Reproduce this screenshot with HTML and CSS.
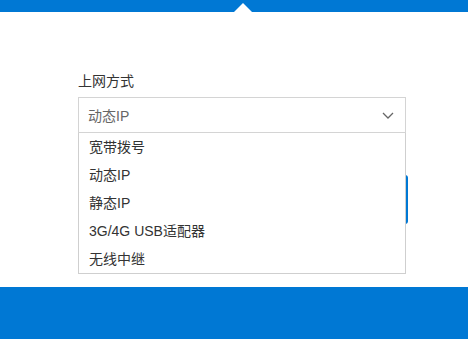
FILE: index.html
```html
<!DOCTYPE html>
<html lang="zh-CN">
<head>
    <meta charset="UTF-8">
    <meta name="viewport" content="width=device-width, initial-scale=1.0">
    <title>上网设置</title>
    <link rel="stylesheet" href="styles.css">
</head>
<body>

    <div class="top-bar"></div>

    <div class="main">
        <div class="field">
            <div class="field-label">上网方式</div>
            <div class="select-wrap">
                <div class="select-box">
                    <span class="select-value">动态IP</span>
                    <svg class="chevron" width="12" height="7" viewBox="0 0 12 7">
                        <path d="M1 1 L6 6 L11 1" fill="none" stroke="#666" stroke-width="1.3"/>
                    </svg>
                </div>
                <ul class="option-list">
                    <li class="option">宽带拨号</li>
                    <li class="option">动态IP</li>
                    <li class="option">静态IP</li>
                    <li class="option">3G/4G USB适配器</li>
                    <li class="option">无线中继</li>
                </ul>
            </div>
            <button class="next-button">下一步</button>
        </div>
    </div>

    <div class="bottom-bar"></div>

</body>
</html>
```

FILE: styles.css
```css
/* Page */
body {
    margin: 0;
    font-family: "Liberation Sans", "Noto Sans CJK SC", sans-serif;
    font-size: 14px;
    color: #333;
    background: #fff;
    overflow: hidden;
}

/* Header strip with the pointer notch */
.top-bar {
    position: relative;
    height: 12px;
    background: #0078d4;
}

.top-bar::after {
    content: "";
    position: absolute;
    left: 234px;
    bottom: 0;
    border-left: 9px solid transparent;
    border-right: 9px solid transparent;
    border-bottom: 9px solid #fff;
}

/* Content area */
.main {
    height: 275px;
    padding: 60px 0 0 78px;
    box-sizing: border-box;
    overflow: hidden;
}

.field {
    width: 328px;
}

.field-label {
    line-height: 18px;
    margin-bottom: 7px;
    color: #333;
}

/* Select box */
.select-wrap {
    position: relative;
}

.select-box {
    height: 36px;
    border: 1px solid #d4d4d4;
    box-sizing: border-box;
    display: flex;
    align-items: center;
    justify-content: space-between;
    padding: 0 11px 0 9px;
}

.select-value {
    color: #666;
}

/* Open dropdown */
.option-list {
    position: absolute;
    top: 100%;
    left: 0;
    right: 0;
    margin: 0;
    padding: 0;
    list-style: none;
    background: #fff;
    border: 1px solid #cfcfcf;
    border-top: none;
    z-index: 2;
}

.option {
    height: 28px;
    line-height: 28px;
    padding-left: 10px;
    color: #333;
}

/* Button hidden behind the list */
.next-button {
    display: block;
    width: 330px;
    height: 49px;
    margin-top: 42px;
    border: none;
    border-radius: 3px;
    background: #0078d4;
    color: #fff;
    font-family: inherit;
    font-size: 14px;
}

/* Footer strip */
.bottom-bar {
    height: 52px;
    background: #0078d4;
}
```
